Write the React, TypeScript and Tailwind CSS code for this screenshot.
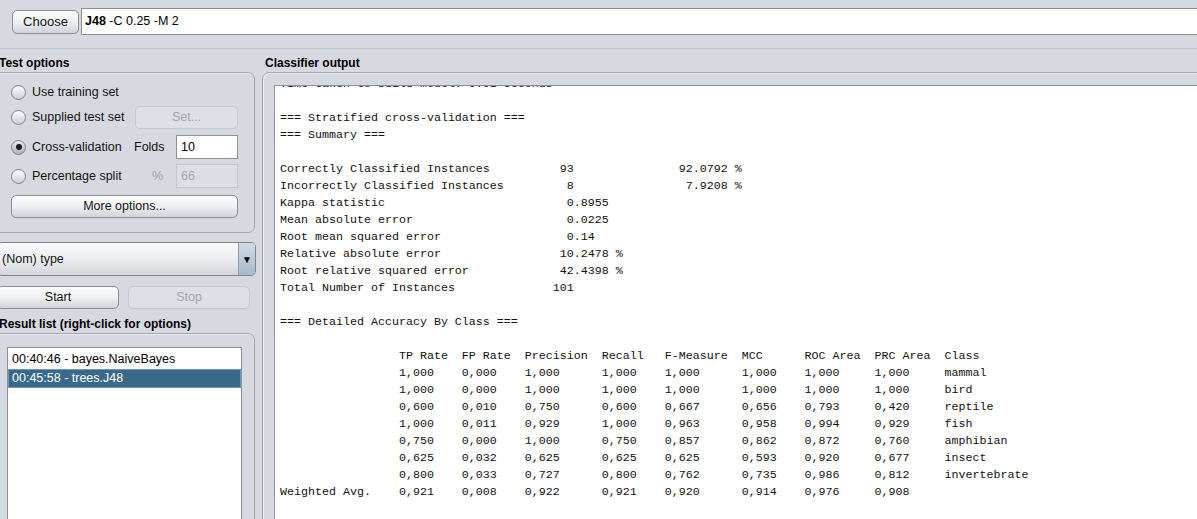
import React from "react";

// Weka explorer, classify tab

const at = (parts: [number, string][]) => {
  let s = "";
  for (const [c, t] of parts) s = s.padEnd(c) + t;
  return s;
};

const cols = [17, 26, 35, 46, 55, 66, 75, 85, 95];

const classRows = [
  ["1,000", "0,000", "1,000", "1,000", "1,000", "1,000", "1,000", "1,000", "mammal"],
  ["1,000", "0,000", "1,000", "1,000", "1,000", "1,000", "1,000", "1,000", "bird"],
  ["0,600", "0,010", "0,750", "0,600", "0,667", "0,656", "0,793", "0,420", "reptile"],
  ["1,000", "0,011", "0,929", "1,000", "0,963", "0,958", "0,994", "0,929", "fish"],
  ["0,750", "0,000", "1,000", "0,750", "0,857", "0,862", "0,872", "0,760", "amphibian"],
  ["0,625", "0,032", "0,625", "0,625", "0,625", "0,593", "0,920", "0,677", "insect"],
  ["0,800", "0,033", "0,727", "0,800", "0,762", "0,735", "0,986", "0,812", "invertebrate"],
];

const outputLines = [
  "Time taken to build model: 0.01 seconds",
  "",
  "=== Stratified cross-validation ===",
  "=== Summary ===",
  "",
  at([[0, "Correctly Classified Instances"], [40, "93"], [57, "92.0792 %"]]),
  at([[0, "Incorrectly Classified Instances"], [41, "8"], [58, "7.9208 %"]]),
  at([[0, "Kappa statistic"], [41, "0.8955"]]),
  at([[0, "Mean absolute error"], [41, "0.0225"]]),
  at([[0, "Root mean squared error"], [41, "0.14"]]),
  at([[0, "Relative absolute error"], [40, "10.2478 %"]]),
  at([[0, "Root relative squared error"], [40, "42.4398 %"]]),
  at([[0, "Total Number of Instances"], [39, "101"]]),
  "",
  "=== Detailed Accuracy By Class ===",
  "",
  at(
    ["TP Rate", "FP Rate", "Precision", "Recall", "F-Measure", "MCC", "ROC Area", "PRC Area", "Class"].map(
      (t, i) => [cols[i], t] as [number, string]
    )
  ),
  ...classRows.map((r) => at(r.map((t, i) => [cols[i], t] as [number, string]))),
  at([
    [0, "Weighted Avg."],
    ...["0,921", "0,008", "0,922", "0,921", "0,920", "0,914", "0,976", "0,908"].map(
      (t, i) => [cols[i], t] as [number, string]
    ),
  ]),
  "",
  "",
];

const btn =
  "flex items-center justify-center rounded-[5px] border border-[#8a8d92] bg-gradient-to-b from-[#fdfdfd] via-[#eef0f2] to-[#d0d3d8] text-[#141414]";
const btnOff =
  "flex items-center justify-center rounded-[5px] border border-[#c6c9ce] bg-[#dde0e4] text-[#a3a6ab]";
const box = "rounded-[7px] border border-[#a4a7ae] shadow-[inset_1px_1px_0_#e9ebee]";

function Radio({ on }: { on?: boolean }) {
  return (
    <span
      className={
        "flex h-[15px] w-[15px] shrink-0 items-center justify-center rounded-full border border-[#7f8287] bg-gradient-to-b " +
        (on ? "from-[#e9ebee] to-[#aeb2b8]" : "from-[#fdfdfd] to-[#cdd0d5]")
      }
    >
      {on && <span className="h-[6px] w-[6px] rounded-full bg-[#1b1b1b]" />}
    </span>
  );
}

function RadioRow({ label, on, children, className }: { label: string; on?: boolean; children?: React.ReactNode; className?: string }) {
  return (
    <div className={"flex items-center " + (className ?? "")}>
      <Radio on={on} />
      <span className="ml-[6px] flex-1">{label}</span>
      {children}
    </div>
  );
}

export default function App() {
  return (
    <div className="relative h-[519px] w-[1197px] overflow-hidden bg-[#d6d9df] font-['Liberation_Sans',Arial,sans-serif] text-[12.5px] text-[#141414]">
      {/* classifier chooser */}
      <div className="flex items-start pl-[12px] pt-[8px]">
        <button className={btn + " mt-[2px] h-[24px] w-[67px] text-[13px]"}>Choose</button>
        <div className="-mr-[20px] ml-[2px] flex h-[27px] flex-1 items-center border border-[#8d9095] bg-white pl-[3px] text-[12.5px] text-black">
          <b>J48</b>
          <span>&nbsp;-C 0.25 -M 2</span>
        </div>
      </div>
      <div className="mt-[13px] h-[1px] bg-[#c3c6cc]" />

      <div className="flex h-[480px]">
        {/* left side */}
        <div className="-ml-[8px] flex w-[263px] shrink-0 flex-col">
          <div className="mt-[7px] h-[14px] pl-[7px] text-[12px] font-bold leading-[14px] text-black">Test options</div>
          <div className={box + " mt-[2px] h-[161px] pl-[18px] pr-[16px] pt-[9px]"}>
            <RadioRow label="Use training set" className="h-[20px]" />
            <RadioRow label="Supplied test set" className="mt-[4px] h-[23px]">
              <button className={btnOff + " h-[23px] w-[103px]"}>Set...</button>
            </RadioRow>
            <RadioRow label="Cross-validation" on className="mt-[6px] h-[24px]">
              <div className="flex w-[104px] items-center justify-between">
                <span>Folds</span>
                <div className="flex h-[24px] w-[62px] items-center border border-[#8d9095] bg-white pl-[4px] text-black">10</div>
              </div>
            </RadioRow>
            <RadioRow label="Percentage split" className="mt-[5px] h-[24px]">
              <div className="flex w-[86px] items-center justify-between">
                <span className="text-[#9da0a5]">%</span>
                <div className="flex h-[24px] w-[62px] items-center border border-[#c3c6cb] bg-[#dcdfe3] pl-[4px] text-[#a4a7ab]">66</div>
              </div>
            </RadioRow>
            <button className={btn + " mt-[7px] h-[23px] w-full"}>More options...</button>
          </div>

          <div className="ml-[5px] mt-[9px] flex h-[34px] w-[259px] items-center overflow-hidden rounded-[5px] border border-[#7f858d] bg-gradient-to-b from-[#fafbfb] via-[#eceef1] to-[#d3d6db]">
            <span className="flex-1 pl-[4px]">(Nom) type</span>
            <span className="flex h-full w-[17px] items-center justify-center border-l border-[#8e9cab] bg-gradient-to-b from-[#d2dce6] to-[#a7b9cb] text-[10px] text-black">
              ▼
            </span>
          </div>

          <div className="ml-[5px] mt-[10px] flex h-[23px] gap-[9px]">
            <button className={btn + " w-[122px]"}>Start</button>
            <button className={btnOff + " w-[122px]"}>Stop</button>
          </div>

          <div className="mt-[8px] h-[14px] pl-[7px] text-[12px] font-bold leading-[14px] text-black">
            Result list (right-click for options)
          </div>
          <div className={box + " mt-[2px] flex-1 pl-[14px] pr-[12px] pt-[13px]"}>
            <div className="h-full border border-[#8d9095] bg-white pt-[1px] text-black">
              <div className="flex h-[20px] items-center pl-[4px]">00:40:46 - bayes.NaiveBayes</div>
              <div className="flex h-[19px] items-center border border-[#6e97ba] bg-[#39698a] pl-[3px] text-white">
                00:45:58 - trees.J48
              </div>
            </div>
          </div>
        </div>

        {/* right side */}
        <div className="-mr-[20px] ml-[7px] flex flex-1 flex-col">
          <div className="mt-[7px] h-[14px] pl-[3px] text-[12px] font-bold leading-[14px] text-black">Classifier output</div>
          <div className={box + " mt-[2px] flex-1 pl-[11px] pt-[12px]"}>
            <div className="h-full overflow-hidden border-l border-t border-[#8d9095] bg-white pl-[5px]">
              <pre className="-mt-[10px] font-['Liberation_Mono','Courier_New',monospace] text-[11.667px] leading-[17px] text-[#111]">
                {outputLines.join("\n")}
              </pre>
            </div>
          </div>
        </div>
      </div>
    </div>
  );
}
